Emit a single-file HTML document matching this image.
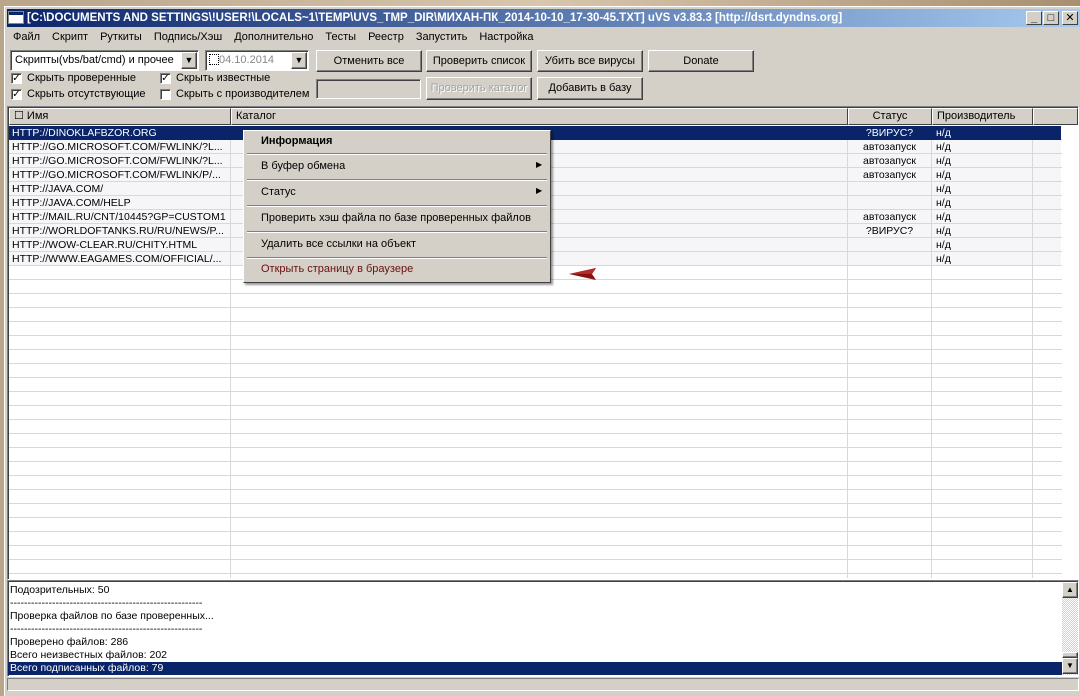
<!DOCTYPE html>
<html><head><meta charset="utf-8"><style>
*{margin:0;padding:0;box-sizing:border-box}
body{width:1080px;height:692px;overflow:hidden;background:linear-gradient(90deg,#b9a58a,#d8c6ad 50%,#a88f70);font-family:"Liberation Sans","DejaVu Sans",sans-serif;font-size:11px;color:#000;position:relative}
.a{position:absolute}
.win{left:4px;top:6px;width:1080px;height:690px;background:#d4d0c8;border-top:1px solid #fff;border-left:1px solid #fff}
.title{left:7px;top:9px;width:1073px;height:18px;background:linear-gradient(90deg,#0a246a,#a6caf0);color:#fff;font-weight:bold;font-size:11.5px;line-height:18px;padding-left:20px;white-space:nowrap;overflow:hidden}
.tb{width:16px;height:14px;background:#d4d0c8;border:1px solid;border-color:#fff #404040 #404040 #fff;top:11px;font-size:11px;line-height:12px;text-align:center;font-weight:bold;color:#000}
.menu span{margin-right:12px}
.btn{background:#d4d0c8;border:1px solid;border-color:#fff #404040 #404040 #fff;box-shadow:inset -1px -1px #808080;text-align:center;font-size:11px;line-height:20px}
.sunk{border:1px solid;border-color:#808080 #fff #fff #808080;box-shadow:inset 1px 1px #404040}
.cb{width:11px;height:11px;background:#fff;border:1px solid;border-color:#808080 #fff #fff #808080;box-shadow:inset 1px 1px #404040;font-size:10px;line-height:9px;text-align:center;font-weight:bold}
.hdr{top:108px;height:17px;background:#d4d0c8;border:1px solid;border-color:#fff #404040 #404040 #fff;line-height:15px;padding-left:4px}
.list{left:9px;top:125px;width:1053px;height:453px;background:#fff repeating-linear-gradient(180deg,transparent 0 13px,#d8d8d8 13px 14px);background-position:0 1px}
.row{position:absolute;left:0;height:14px;line-height:14px;font-size:10.5px;white-space:nowrap}
.ctx{left:243px;top:130px;width:308px;height:153px;background:#d4d0c8;border:1px solid;border-color:#fff #404040 #404040 #fff;box-shadow:2px 2px 2px rgba(0,0,0,.4)}
.ci{position:absolute;left:17px;font-size:11px}
.sep{position:absolute;left:3px;right:3px;height:2px;border-top:1px solid #808080;border-bottom:1px solid #fff}
.log div{height:13px;line-height:13px;font-size:10.5px;padding-left:2px;white-space:nowrap}
</style></head><body>
<div class="a win"></div>
<div class="a title">[C:\DOCUMENTS AND SETTINGS\!USER!\LOCALS~1\TEMP\UVS_TMP_DIR\МИХАН-ПК_2014-10-10_17-30-45.TXT] uVS v3.83.3 [http://dsrt.dyndns.org]</div>
<div class="a" style="left:9px;top:12px;width:14px;height:11px;background:#fff;border-top:3px solid #0a246a;outline:1px solid #888"></div>
<div class="a tb" style="left:1026px">_</div><div class="a tb" style="left:1043px">□</div><div class="a tb" style="left:1062px">✕</div>
<div class="a menu" style="left:13px;top:30px;line-height:14px;white-space:nowrap"><span>Файл</span><span>Скрипт</span><span>Руткиты</span><span>Подпись/Хэш</span><span>Дополнительно</span><span>Тесты</span><span>Реестр</span><span>Запустить</span><span>Настройка</span></div>
<div class="a sunk" style="left:10px;top:50px;width:189px;height:21px;background:#fff;padding:2px 4px;line-height:15px">Скрипты(vbs/bat/cmd) и прочее</div>
<div class="a btn" style="left:181px;top:52px;width:16px;height:17px;line-height:15px;font-size:9px">▼</div>
<div class="a sunk" style="left:205px;top:50px;width:104px;height:21px;background:#fff;padding:2px 3px;line-height:15px;color:#888"><span style="display:inline-block;width:10px;height:11px;border:1px dotted #000;vertical-align:-2px"></span>04.10.2014</div>
<div class="a btn" style="left:291px;top:52px;width:16px;height:17px;line-height:15px;font-size:9px">▼</div>
<div class="a btn" style="left:316px;top:50px;width:106px;height:22px">Отменить все</div>
<div class="a btn" style="left:426px;top:50px;width:106px;height:22px">Проверить список</div>
<div class="a btn" style="left:537px;top:50px;width:106px;height:22px">Убить все вирусы</div>
<div class="a btn" style="left:648px;top:50px;width:106px;height:22px">Donate</div>
<div class="a sunk" style="left:316px;top:79px;width:105px;height:20px;background:#d4d0c8"></div>
<div class="a btn" style="left:426px;top:77px;width:106px;height:23px;color:#a0a0a0;text-shadow:1px 1px #fff">Проверить каталог</div>
<div class="a btn" style="left:537px;top:77px;width:106px;height:23px">Добавить в базу</div>
<div class="a cb" style="left:11px;top:73px">✓</div><div class="a" style="left:27px;top:72px">Скрыть проверенные</div>
<div class="a cb" style="left:160px;top:73px">✓</div><div class="a" style="left:176px;top:72px">Скрыть известные</div>
<div class="a cb" style="left:11px;top:89px">✓</div><div class="a" style="left:27px;top:88px">Скрыть отсутствующие</div>
<div class="a cb" style="left:160px;top:89px"></div><div class="a" style="left:176px;top:88px">Скрыть с производителем</div>
<div class="a sunk" style="left:7px;top:106px;width:1072px;height:474px;background:#fff"></div>
<div class="a hdr" style="left:9px;width:222px">☐ Имя</div>
<div class="a hdr" style="left:231px;width:617px">Каталог</div>
<div class="a hdr" style="left:848px;width:84px;text-align:center;padding:0">Статус</div>
<div class="a hdr" style="left:932px;width:101px">Производитель</div>
<div class="a hdr" style="left:1033px;width:45px"></div>
<div class="a list">
<div class="a" style="left:0;top:15px;width:1052px;height:126px;background:repeating-linear-gradient(180deg,#f6f6f8 0 13px,#d8d8d8 13px 14px)"></div>
<div class="a" style="left:221px;top:0;width:1px;height:453px;background:#d8d8d8"></div>
<div class="a" style="left:838px;top:0;width:1px;height:453px;background:#d8d8d8"></div>
<div class="a" style="left:922px;top:0;width:1px;height:453px;background:#d8d8d8"></div>
<div class="a" style="left:1023px;top:0;width:1px;height:453px;background:#d8d8d8"></div>
<div class="row" style="top:1px;width:1052px;background:#0a246a"></div>
<div class="row" style="top:1px;left:3px;color:#fff">HTTP://DINOKLAFBZOR.ORG</div>
<div class="row" style="top:15px;left:3px">HTTP://GO.MICROSOFT.COM/FWLINK/?L...</div>
<div class="row" style="top:29px;left:3px">HTTP://GO.MICROSOFT.COM/FWLINK/?L...</div>
<div class="row" style="top:43px;left:3px">HTTP://GO.MICROSOFT.COM/FWLINK/P/...</div>
<div class="row" style="top:57px;left:3px">HTTP://JAVA.COM/</div>
<div class="row" style="top:71px;left:3px">HTTP://JAVA.COM/HELP</div>
<div class="row" style="top:85px;left:3px">HTTP://MAIL.RU/CNT/10445?GP=CUSTOM1</div>
<div class="row" style="top:99px;left:3px">HTTP://WORLDOFTANKS.RU/RU/NEWS/P...</div>
<div class="row" style="top:113px;left:3px">HTTP://WOW-CLEAR.RU/CHITY.HTML</div>
<div class="row" style="top:127px;left:3px">HTTP://WWW.EAGAMES.COM/OFFICIAL/...</div>
<div class="row" style="top:1px;left:839px;width:83px;text-align:center;color:#fff">?ВИРУС?</div>
<div class="row" style="top:15px;left:839px;width:83px;text-align:center">автозапуск</div>
<div class="row" style="top:29px;left:839px;width:83px;text-align:center">автозапуск</div>
<div class="row" style="top:43px;left:839px;width:83px;text-align:center">автозапуск</div>
<div class="row" style="top:85px;left:839px;width:83px;text-align:center">автозапуск</div>
<div class="row" style="top:99px;left:839px;width:83px;text-align:center">?ВИРУС?</div>
<div class="row" style="top:1px;left:927px;color:#fff">н/д</div>
<div class="row" style="top:15px;left:927px">н/д</div><div class="row" style="top:29px;left:927px">н/д</div><div class="row" style="top:43px;left:927px">н/д</div><div class="row" style="top:57px;left:927px">н/д</div><div class="row" style="top:71px;left:927px">н/д</div><div class="row" style="top:85px;left:927px">н/д</div><div class="row" style="top:99px;left:927px">н/д</div><div class="row" style="top:113px;left:927px">н/д</div><div class="row" style="top:127px;left:927px">н/д</div>
</div>
<div class="a ctx">
<div class="ci" style="top:4px;font-weight:bold">Информация</div>
<div class="sep" style="top:22px"></div>
<div class="ci" style="top:29px">В буфер обмена</div><div class="ci" style="top:29px;left:292px;font-size:8px">▶</div>
<div class="sep" style="top:48px"></div>
<div class="ci" style="top:55px">Статус</div><div class="ci" style="top:55px;left:292px;font-size:8px">▶</div>
<div class="sep" style="top:74px"></div>
<div class="ci" style="top:81px">Проверить хэш файла по базе проверенных файлов</div>
<div class="sep" style="top:100px"></div>
<div class="ci" style="top:107px">Удалить все ссылки на объект</div>
<div class="sep" style="top:126px"></div>
<div class="ci" style="top:132px;color:#6b0f0f">Открыть страницу в браузере</div>
</div>
<svg class="a" style="left:568px;top:266px" width="32" height="16"><polygon points="1,8 28,2 24,8 28,14" fill="#8b1010"/><polygon points="1,8 28,2 24,8" fill="#b52a2a"/></svg>
<div class="a sunk" style="left:7px;top:580px;width:1072px;height:97px;background:#fff"></div>
<div class="a log" style="left:8px;top:584px;width:1054px">
<div>Подозрительных: 50</div><div>-------------------------------------------------------</div><div>Проверка файлов по базе проверенных...</div><div>-------------------------------------------------------</div><div>Проверено файлов: 286</div><div>Всего неизвестных файлов: 202</div><div style="background:#0a246a;color:#fff">Всего подписанных файлов: 79</div>
</div>
<div class="a" style="left:1062px;top:582px;width:16px;height:93px;background:repeating-conic-gradient(#d4d0c8 0 25%,#fff 0 50%) 0 0/2px 2px"></div>
<div class="a btn" style="left:1062px;top:582px;width:16px;height:16px;line-height:13px;font-size:8px">▲</div>
<div class="a btn" style="left:1062px;top:658px;width:16px;height:16px;line-height:13px;font-size:8px">▼</div>
<div class="a btn" style="left:1062px;top:652px;width:16px;height:6px"></div>
<div class="a sunk" style="left:7px;top:678px;width:1072px;height:13px;box-shadow:none"></div>
</body></html>
